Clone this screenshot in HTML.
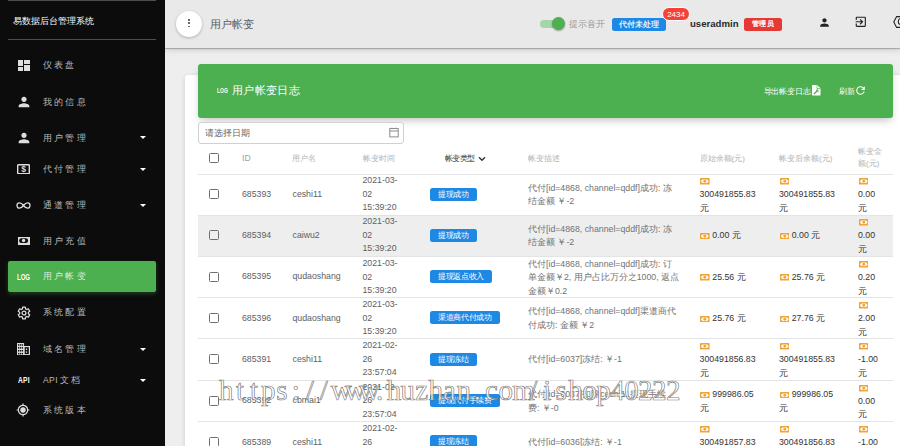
<!DOCTYPE html>
<html><head><meta charset="utf-8"><style>
*{box-sizing:border-box;margin:0;padding:0}
html,body{width:900px;height:446px;overflow:hidden;background:#eeeeee;font-family:'Liberation Sans',sans-serif;}
.abs{position:absolute}
#side{position:absolute;left:0;top:0;width:165px;height:446px;background:#0c0c0c;}
.sline{position:absolute;left:8px;width:148px;height:1px;background:#4e4e4e}
.title{position:absolute;left:13px;top:15px;font-size:9px;color:#fff;line-height:12px;white-space:nowrap}
.mi{position:absolute;left:43px;font-size:8.5px;color:#b8b8b8;letter-spacing:2.2px;line-height:12px;white-space:nowrap}
.ic{position:absolute;}
.caret{position:absolute;left:140px;width:0;height:0;border-left:3px solid transparent;border-right:3px solid transparent;border-top:3.5px solid #fff}
#hdr{position:absolute;left:165px;top:0;width:735px;height:48px;background:#e9e9e9;box-shadow:0 1px 1px rgba(0,0,0,.22),0 2px 6px rgba(0,0,0,.14)}
.card{position:absolute;left:185px;top:75px;width:730px;height:400px;background:#fff;border-radius:3px;box-shadow:0 1px 4px rgba(0,0,0,.14)}
.gh{position:absolute;left:198px;top:64px;width:695px;height:53.8px;background:#4caf50;border-radius:3px;box-shadow:0 4px 8px -2px rgba(0,0,0,.25)}
.th{position:absolute;font-size:8px;color:#b3b3b3;line-height:12px;white-space:nowrap}
.td{position:absolute;font-size:8.75px;color:#5e5e5e;line-height:13.5px;white-space:nowrap}
.cb{position:absolute;left:209.2px;width:10px;height:10px;border:1.3px solid #707070;border-radius:1.5px}
.badge{position:absolute;left:430px;height:12.9px;background:#1e88e5;border-radius:2.5px;color:#fff;font-size:7.6px;letter-spacing:-.35px;line-height:13.8px;padding:0 8.1px 0 8px;overflow:hidden;white-space:nowrap;font-weight:normal}
.rowline{position:absolute;left:198px;width:695px;height:1px;background:#e4e4e4}
.money{display:inline-block;width:9.6px;height:6.6px;vertical-align:-1.2px;margin-left:.7px}
</style></head><body>
<div id="side"><div class="sline" style="top:0"></div><div class="title">易数据后台管理系统</div><div class="sline" style="top:39px"></div><svg class="ic" style="left:18px;top:59.7px" width="12" height="12" viewBox="0 0 12 12"><rect x="0" y="0" width="5" height="6" fill="#ddd"/><rect x="0" y="7" width="5" height="4" fill="#ddd"/><rect x="6" y="0" width="6" height="4" fill="#ddd"/><rect x="6" y="5" width="6" height="6" fill="#ddd"/></svg><div class="mi" style="top:59.2px">仪表盘</div><svg class="ic" style="left:15.5px;top:93.6px" width="16" height="16" viewBox="0 0 24 24"><path fill="#ddd" d="M12 12c2.21 0 4-1.79 4-4s-1.79-4-4-4-4 1.79-4 4 1.79 4 4 4zm0 2c-2.67 0-8 1.34-8 4v2h16v-2c0-2.66-5.33-4-8-4z"/></svg><div class="mi" style="top:95.6px">我的信息</div><svg class="ic" style="left:15.5px;top:129.5px" width="16" height="16" viewBox="0 0 24 24"><path fill="#ddd" d="M12 12c2.21 0 4-1.79 4-4s-1.79-4-4-4-4 1.79-4 4 1.79 4 4 4zm0 2c-2.67 0-8 1.34-8 4v2h16v-2c0-2.66-5.33-4-8-4z"/></svg><div class="mi" style="top:131.5px">用户管理</div><div class="caret" style="top:136.0px"></div><svg class="ic" style="left:17.4px;top:163.5px" width="13" height="10.4" viewBox="0 0 13 10.4"><rect x="0.7" y="0.7" width="11.6" height="9" rx="0.6" fill="none" stroke="#ddd" stroke-width="1.4"/><text x="6.5" y="8.4" font-size="8.5" font-weight="bold" fill="#ddd" text-anchor="middle" font-family="Liberation Sans">$</text></svg><div class="mi" style="top:163px">代付管理</div><div class="caret" style="top:167.5px"></div><svg class="ic" style="left:15px;top:200.5px" width="17" height="9" viewBox="0 0 17 9"><path d="M8.5 4.5 C6 1 2 1 2 4.5 C2 8 6 8 8.5 4.5 C11 1 15 1 15 4.5 C15 8 11 8 8.5 4.5Z" fill="none" stroke="#ddd" stroke-width="1.3"/></svg><div class="mi" style="top:199px">通道管理</div><div class="caret" style="top:203.5px"></div><svg class="ic" style="left:18px;top:237px" width="12" height="8" viewBox="0 0 12 8"><rect x="0" y="0" width="12" height="8" fill="#ddd"/><rect x="1.1" y="1.25" width="9" height="4.8" rx="2.4" fill="#0c0c0c"/><circle cx="5.6" cy="3.5" r="1.7" fill="#ddd"/></svg><div class="mi" style="top:234.6px">用户充值</div><div class="abs" style="left:8px;top:261px;width:148px;height:31px;background:#4caf50;border-radius:2px;box-shadow:0 2px 4px rgba(76,175,80,.3)"></div><div class="abs" style="left:17px;top:271.6px;font-size:9px;font-weight:bold;color:#fff;line-height:11px;transform:scaleX(.67);transform-origin:left">LOG</div><div class="mi" style="top:270px;color:#dcebdc">用户帐变</div><svg class="ic" style="left:16.8px;top:305.7px" width="14" height="14" viewBox="0 0 24 24"><path fill="none" stroke="#ddd" stroke-width="2.1" stroke-linejoin="round" d="M9.68 1.96 L14.32 1.96 L14.72 4.90 L16.78 6.09 L19.53 4.98 L21.85 8.99 L19.51 10.81 L19.51 13.19 L21.85 15.01 L19.53 19.02 L16.78 17.91 L14.72 19.10 L14.32 22.04 L9.68 22.04 L9.28 19.10 L7.22 17.91 L4.47 19.02 L2.15 15.01 L4.49 13.19 L4.49 10.81 L2.15 8.99 L4.47 4.98 L7.22 6.09 L9.28 4.90Z"/><circle cx="12" cy="12" r="3.3" fill="none" stroke="#ddd" stroke-width="2.1"/></svg><div class="mi" style="top:306px">系统配置</div><svg class="ic" style="left:17.1px;top:342.6px" width="13" height="12.3" viewBox="0 0 13 12.3"><rect x="0" y="0" width="7.1" height="12.3" fill="#ddd"/><rect x="1.0" y="1.2" width="1.3" height="1.5" fill="#0c0c0c"/><rect x="1.0" y="4.1" width="1.3" height="1.5" fill="#0c0c0c"/><rect x="1.0" y="7.0" width="1.3" height="1.5" fill="#0c0c0c"/><rect x="1.0" y="9.9" width="1.3" height="1.5" fill="#0c0c0c"/><rect x="2.9" y="1.2" width="1.3" height="1.5" fill="#0c0c0c"/><rect x="2.9" y="4.1" width="1.3" height="1.5" fill="#0c0c0c"/><rect x="2.9" y="7.0" width="1.3" height="1.5" fill="#0c0c0c"/><rect x="2.9" y="9.9" width="1.3" height="1.5" fill="#0c0c0c"/><rect x="4.8" y="1.2" width="1.3" height="1.5" fill="#0c0c0c"/><rect x="4.8" y="4.1" width="1.3" height="1.5" fill="#0c0c0c"/><rect x="4.8" y="7.0" width="1.3" height="1.5" fill="#0c0c0c"/><rect x="4.8" y="9.9" width="1.3" height="1.5" fill="#0c0c0c"/><rect x="7.1" y="3.6" width="5.3" height="8.1" fill="none" stroke="#ddd" stroke-width="1.2"/><rect x="8.8" y="5.6" width="1.4" height="1.4" fill="#ddd"/><rect x="8.8" y="8.4" width="1.4" height="1.4" fill="#ddd"/></svg><div class="mi" style="top:343px">域名管理</div><div class="caret" style="top:347.5px"></div><div class="abs" style="left:18px;top:374.4px;font-size:9.5px;font-weight:bold;color:#fff;line-height:11px;transform:scaleX(.7);transform-origin:left;letter-spacing:.3px">API</div><div class="mi" style="top:374px"><span style="letter-spacing:.4px;margin-right:2px">API</span>文档</div><div class="caret" style="top:378.5px"></div><svg class="ic" style="left:16.4px;top:403px" width="14" height="14" viewBox="0 0 24 24"><circle cx="12" cy="12" r="4.6" fill="#ddd"/><path fill="#ddd" d="M12 8c-2.21 0-4 1.79-4 4s1.79 4 4 4 4-1.79 4-4-1.79-4-4-4zm8.94 3A8.994 8.994 0 0 0 13 3.06V1h-2v2.06A8.994 8.994 0 0 0 3.06 11H1v2h2.06A8.994 8.994 0 0 0 11 20.94V23h2v-2.06A8.994 8.994 0 0 0 20.94 13H23v-2h-2.06zM12 19c-3.87 0-7-3.13-7-7s3.13-7 7-7 7 3.13 7 7-3.13 7-7 7z"/></svg><div class="mi" style="top:404px">系统版本</div></div><div id="hdr"></div><div class="abs" style="left:176px;top:10.5px;width:26px;height:26px;border-radius:50%;background:#fff;box-shadow:0 1px 3px rgba(0,0,0,.25)"></div><div class="abs" style="left:188.1px;top:19.1px;width:1.7px;height:1.7px;background:#666;border-radius:.3px"></div><div class="abs" style="left:188.1px;top:22.45px;width:1.7px;height:1.7px;background:#666;border-radius:.3px"></div><div class="abs" style="left:188.1px;top:25.8px;width:1.7px;height:1.7px;background:#666;border-radius:.3px"></div><div class="abs" style="left:210px;top:17px;font-size:11px;color:#5c5c5c;line-height:14px">用户帐变</div><div class="abs" style="left:540px;top:20px;width:21px;height:8px;border-radius:4px;background:#a5d6a7"></div><div class="abs" style="left:551.5px;top:17.2px;width:13px;height:13px;border-radius:50%;background:#4caf50;box-shadow:0 1px 2px rgba(0,0,0,.35)"></div><div class="abs" style="left:569px;top:18px;font-size:9px;color:#999;line-height:12px">提示音开</div><div class="abs" style="left:612px;top:18px;width:54px;height:12.8px;border-radius:2.5px;background:#1e88e5;color:#fff;font-size:8px;line-height:13px;text-align:center;letter-spacing:-.2px;font-weight:normal;-webkit-text-stroke:.15px #fff">代付未处理</div><div class="abs" style="left:662.3px;top:7px;width:27.5px;height:13.8px;border-radius:7px;background:#f44336;border:1.5px solid #fff;color:#fff;font-size:8px;line-height:13.2px;text-align:center">2434</div><div class="abs" style="left:690px;top:16.5px;font-size:9.6px;color:#2a2a2a;font-weight:bold;line-height:13px">useradmin</div><div class="abs" style="left:744px;top:18.2px;width:38px;height:12.6px;border-radius:2.5px;background:#e53935;color:#fff;font-size:7.4px;line-height:12.8px;text-align:center;letter-spacing:.3px;-webkit-text-stroke:.3px #fff">管理员</div><svg class="ic" style="left:817.5px;top:15.5px" width="13" height="13" viewBox="0 0 24 24"><path fill="#222" d="M12 12c2.21 0 4-1.79 4-4s-1.79-4-4-4-4 1.79-4 4 1.79 4 4 4zm0 2c-2.67 0-8 1.34-8 4v2h16v-2c0-2.66-5.33-4-8-4z"/></svg><svg class="ic" style="left:854px;top:15.4px" width="13.6" height="13.6" viewBox="0 0 24 24"><path fill="#222" d="M10.09 15.59L11.5 17l5-5-5-5-1.41 1.41L12.67 11H3v2h9.67l-2.58 2.59zM19 3H5c-1.11 0-2 .9-2 2v4h2V5h14v14H5v-4H3v4c0 1.1.89 2 2 2h14c1.1 0 2-.9 2-2V5c0-1.1-.9-2-2-2z"/></svg><svg class="ic" style="left:892px;top:15px" width="16" height="14" viewBox="0 0 16 14"><path d="M1.8 7 L4.6 1.6 H10.7 L13.7 7 L10.7 12.4 H4.6 Z" fill="none" stroke="#222" stroke-width="1.1"/><circle cx="9.5" cy="6.5" r="3.2" fill="none" stroke="#222" stroke-width="1.1"/></svg><div class="card"></div><div class="gh"></div><div class="abs" style="left:216.7px;top:86.5px;font-size:6.6px;font-weight:bold;color:#fff;line-height:8px;transform:scaleX(.76);transform-origin:left">LOG</div><div class="abs" style="left:232px;top:83.3px;font-size:11.3px;color:#fff;line-height:14px;letter-spacing:.35px">用户帐变日志</div><div class="abs" style="left:763.5px;top:87px;font-size:7.55px;color:#fff;line-height:10px;letter-spacing:-.05px">导出帐变日志</div><svg class="ic" style="left:812.2px;top:85px" width="8.5" height="10.5" viewBox="0 0 8.5 10.5"><path d="M0 .6a.6.6 0 0 1 .6-.6h4.6L8.5 3.3v6.6a.6.6 0 0 1-.6.6H.6a.6.6 0 0 1-.6-.6z" fill="#fff"/><path d="M5 0.2 L5 3.5 L8.3 3.5" fill="none" stroke="#4caf50" stroke-width=".7"/><path d="M2 9 L5.3 5.7" stroke="#4caf50" stroke-width="1.3" fill="none"/><path d="M3.6 4.6 L6.4 4.6 L6.4 7.4 Z" fill="#4caf50"/></svg><div class="abs" style="left:838.8px;top:87px;font-size:7.6px;color:#fff;line-height:10px">刷新</div><svg class="ic" style="left:853.5px;top:84px" width="13" height="13" viewBox="0 0 24 24"><path fill="#fff" d="M17.65 6.35A7.958 7.958 0 0 0 12 4c-4.42 0-7.99 3.58-7.99 8s3.57 8 7.99 8c3.73 0 6.84-2.55 7.73-6h-2.08A5.99 5.99 0 0 1 12 18c-3.31 0-6-2.69-6-6s2.69-6 6-6c1.66 0 3.14.69 4.22 1.78L13 11h7V4l-2.35 2.35z"/></svg><div class="abs" style="left:198px;top:122px;width:205.5px;height:21.8px;border:.8px solid #d0d0d0;border-radius:3px;background:#fff"></div><div class="abs" style="left:205.3px;top:126.5px;font-size:8.75px;color:#666;line-height:12px">请选择日期</div><svg class="ic" style="left:388.5px;top:127px" width="10" height="10.5" viewBox="0 0 10 10.5"><rect x="0.8" y="1.6" width="8.4" height="8.3" fill="none" stroke="#808080" stroke-width=".9"/><line x1="0.8" y1="4" x2="9.2" y2="4" stroke="#808080" stroke-width=".9"/><line x1="3" y1="0.6" x2="3" y2="2" stroke="#808080" stroke-width=".8"/><line x1="7" y1="0.6" x2="7" y2="2" stroke="#808080" stroke-width=".8"/></svg><div class="cb" style="top:153.25px"></div><div class="th" style="left:242px;top:152.2px;font-size:8.75px;color:#a0a0a0">ID</div><div class="th" style="left:292px;top:152.5px">用户名</div><div class="th" style="left:362.7px;top:152.5px">帐变时间</div><div class="th" style="left:528px;top:152.5px">帐变描述</div><div class="th" style="left:699.6px;top:152.5px">原始余额(元)</div><div class="th" style="left:779px;top:152.5px">帐变后余额(元)</div><div class="th" style="left:858px;top:146px;line-height:12.4px">帐变金<br>额(元)</div><div class="th" style="left:444.5px;top:152.5px;color:#333;letter-spacing:-.4px">帐变类型</div><svg class="ic" style="left:478px;top:155.5px" width="8" height="6" viewBox="0 0 8 6"><path d="M1 1.2 L4 4.2 L7 1.2" fill="none" stroke="#333" stroke-width="1.4"/></svg><div class="rowline" style="top:174px"></div><div class="cb" style="top:189.0px"></div><div class="td" style="left:242px;top:187.70000000000002px">685393</div><div class="td" style="left:292.5px;top:187.70000000000002px">ceshi11</div><div class="td" style="left:362.5px;top:174.3px">2021-03-<br>02<br>15:39:20</div><div class="badge" style="top:187.9px">提现成功</div><div class="td" style="left:528px;top:181.60000000000002px;color:#727272">代付[id=4868, channel=qddf]成功: 冻<br>结金额 ￥-2</div><div class="td" style="left:699.6px;top:174.8px;color:#333"><svg class="money" viewBox="0 0 9.6 6.6"><rect x="0" y="0" width="9.6" height="6.6" rx="0.6" fill="#f0a53a"/><rect x="1.3" y="1.5" width="7" height="3.6" rx="1.8" fill="#fff"/><circle cx="4.8" cy="3.3" r="1.45" fill="#f0a53a"/></svg><br>300491855.83<br>元</div><div class="td" style="left:779px;top:174.8px;color:#333"><svg class="money" viewBox="0 0 9.6 6.6"><rect x="0" y="0" width="9.6" height="6.6" rx="0.6" fill="#f0a53a"/><rect x="1.3" y="1.5" width="7" height="3.6" rx="1.8" fill="#fff"/><circle cx="4.8" cy="3.3" r="1.45" fill="#f0a53a"/></svg><br>300491855.83<br>元</div><div class="td" style="left:858px;top:174.8px;color:#333"><svg class="money" viewBox="0 0 9.6 6.6"><rect x="0" y="0" width="9.6" height="6.6" rx="0.6" fill="#f0a53a"/><rect x="1.3" y="1.5" width="7" height="3.6" rx="1.8" fill="#fff"/><circle cx="4.8" cy="3.3" r="1.45" fill="#f0a53a"/></svg><br>0.00<br>元</div><div class="abs" style="left:198px;top:215px;width:695px;height:40.900000000000006px;background:#eeeeee"></div><div class="rowline" style="top:215px"></div><div class="cb" style="top:229.85px"></div><div class="td" style="left:242px;top:228.65px">685394</div><div class="td" style="left:292.5px;top:228.65px">caiwu2</div><div class="td" style="left:362.5px;top:215.25px">2021-03-<br>02<br>15:39:20</div><div class="badge" style="top:228.85px">提现成功</div><div class="td" style="left:528px;top:222.55px;color:#727272">代付[id=4868, channel=qddf]成功: 冻<br>结金额 ￥-2</div><div class="td" style="left:699.6px;top:229.1px;color:#333"><svg class="money" viewBox="0 0 9.6 6.6"><rect x="0" y="0" width="9.6" height="6.6" rx="0.6" fill="#f0a53a"/><rect x="1.3" y="1.5" width="7" height="3.6" rx="1.8" fill="#fff"/><circle cx="4.8" cy="3.3" r="1.45" fill="#f0a53a"/></svg> 0.00 元</div><div class="td" style="left:779px;top:229.1px;color:#333"><svg class="money" viewBox="0 0 9.6 6.6"><rect x="0" y="0" width="9.6" height="6.6" rx="0.6" fill="#f0a53a"/><rect x="1.3" y="1.5" width="7" height="3.6" rx="1.8" fill="#fff"/><circle cx="4.8" cy="3.3" r="1.45" fill="#f0a53a"/></svg> 0.00 元</div><div class="td" style="left:858px;top:215.75px;color:#333"><svg class="money" viewBox="0 0 9.6 6.6"><rect x="0" y="0" width="9.6" height="6.6" rx="0.6" fill="#f0a53a"/><rect x="1.3" y="1.5" width="7" height="3.6" rx="1.8" fill="#fff"/><circle cx="4.8" cy="3.3" r="1.45" fill="#f0a53a"/></svg><br>0.00<br>元</div><div class="rowline" style="top:255.9px"></div><div class="cb" style="top:271.7px"></div><div class="td" style="left:242px;top:270.4px">685395</div><div class="td" style="left:292.5px;top:270.4px">qudaoshang</div><div class="td" style="left:362.5px;top:257.0px">2021-03-<br>02<br>15:39:20</div><div class="badge" style="top:270.29999999999995px">提现返点收入</div><div class="td" style="left:528px;top:257.55px;color:#727272">代付[id=4868, channel=qddf]成功: 订<br>单金额￥2, 用户占比万分之1000, 返点<br>金额￥0.2</div><div class="td" style="left:699.6px;top:270.85px;color:#333"><svg class="money" viewBox="0 0 9.6 6.6"><rect x="0" y="0" width="9.6" height="6.6" rx="0.6" fill="#f0a53a"/><rect x="1.3" y="1.5" width="7" height="3.6" rx="1.8" fill="#fff"/><circle cx="4.8" cy="3.3" r="1.45" fill="#f0a53a"/></svg> 25.56 元</div><div class="td" style="left:779px;top:270.85px;color:#333"><svg class="money" viewBox="0 0 9.6 6.6"><rect x="0" y="0" width="9.6" height="6.6" rx="0.6" fill="#f0a53a"/><rect x="1.3" y="1.5" width="7" height="3.6" rx="1.8" fill="#fff"/><circle cx="4.8" cy="3.3" r="1.45" fill="#f0a53a"/></svg> 25.76 元</div><div class="td" style="left:858px;top:257.5px;color:#333"><svg class="money" viewBox="0 0 9.6 6.6"><rect x="0" y="0" width="9.6" height="6.6" rx="0.6" fill="#f0a53a"/><rect x="1.3" y="1.5" width="7" height="3.6" rx="1.8" fill="#fff"/><circle cx="4.8" cy="3.3" r="1.45" fill="#f0a53a"/></svg><br>0.20<br>元</div><div class="rowline" style="top:296.9px"></div><div class="cb" style="top:312.7px"></div><div class="td" style="left:242px;top:311.5px">685396</div><div class="td" style="left:292.5px;top:311.5px">qudaoshang</div><div class="td" style="left:362.5px;top:298.1px">2021-03-<br>02<br>15:39:20</div><div class="badge" style="top:311.4px">渠道商代付成功</div><div class="td" style="left:528px;top:305.40000000000003px;color:#727272">代付[id=4868, channel=qddf]渠道商代<br>付成功: 金额 ￥2</div><div class="td" style="left:699.6px;top:311.95000000000005px;color:#333"><svg class="money" viewBox="0 0 9.6 6.6"><rect x="0" y="0" width="9.6" height="6.6" rx="0.6" fill="#f0a53a"/><rect x="1.3" y="1.5" width="7" height="3.6" rx="1.8" fill="#fff"/><circle cx="4.8" cy="3.3" r="1.45" fill="#f0a53a"/></svg> 25.76 元</div><div class="td" style="left:779px;top:311.95000000000005px;color:#333"><svg class="money" viewBox="0 0 9.6 6.6"><rect x="0" y="0" width="9.6" height="6.6" rx="0.6" fill="#f0a53a"/><rect x="1.3" y="1.5" width="7" height="3.6" rx="1.8" fill="#fff"/><circle cx="4.8" cy="3.3" r="1.45" fill="#f0a53a"/></svg> 27.76 元</div><div class="td" style="left:858px;top:298.6px;color:#333"><svg class="money" viewBox="0 0 9.6 6.6"><rect x="0" y="0" width="9.6" height="6.6" rx="0.6" fill="#f0a53a"/><rect x="1.3" y="1.5" width="7" height="3.6" rx="1.8" fill="#fff"/><circle cx="4.8" cy="3.3" r="1.45" fill="#f0a53a"/></svg><br>2.00<br>元</div><div class="rowline" style="top:338.1px"></div><div class="cb" style="top:354.1px"></div><div class="td" style="left:242px;top:352.8px">685391</div><div class="td" style="left:292.5px;top:352.8px">ceshi11</div><div class="td" style="left:362.5px;top:339.40000000000003px">2021-02-<br>26<br>23:57:04</div><div class="badge" style="top:352.7px">提现冻结</div><div class="td" style="left:528px;top:353.45000000000005px;color:#727272">代付[id=6037]冻结: ￥-1</div><div class="td" style="left:699.6px;top:339.90000000000003px;color:#333"><svg class="money" viewBox="0 0 9.6 6.6"><rect x="0" y="0" width="9.6" height="6.6" rx="0.6" fill="#f0a53a"/><rect x="1.3" y="1.5" width="7" height="3.6" rx="1.8" fill="#fff"/><circle cx="4.8" cy="3.3" r="1.45" fill="#f0a53a"/></svg><br>300491856.83<br>元</div><div class="td" style="left:779px;top:339.90000000000003px;color:#333"><svg class="money" viewBox="0 0 9.6 6.6"><rect x="0" y="0" width="9.6" height="6.6" rx="0.6" fill="#f0a53a"/><rect x="1.3" y="1.5" width="7" height="3.6" rx="1.8" fill="#fff"/><circle cx="4.8" cy="3.3" r="1.45" fill="#f0a53a"/></svg><br>300491855.83<br>元</div><div class="td" style="left:858px;top:339.90000000000003px;color:#333"><svg class="money" viewBox="0 0 9.6 6.6"><rect x="0" y="0" width="9.6" height="6.6" rx="0.6" fill="#f0a53a"/><rect x="1.3" y="1.5" width="7" height="3.6" rx="1.8" fill="#fff"/><circle cx="4.8" cy="3.3" r="1.45" fill="#f0a53a"/></svg><br>-1.00<br>元</div><div class="rowline" style="top:379.5px"></div><div class="cb" style="top:395.6px"></div><div class="td" style="left:242px;top:394.25px">685392</div><div class="td" style="left:292.5px;top:394.25px">cbmai1</div><div class="td" style="left:362.5px;top:380.85px">2021-02-<br>26<br>23:57:04</div><div class="badge" style="top:394.15px">提现代付手续费</div><div class="td" style="left:528px;top:388.15000000000003px;color:#727272">代付[id=6037]扣除ceshi11提现手续<br>费: ￥-0</div><div class="td" style="left:699.6px;top:388.05px;color:#333"><svg class="money" viewBox="0 0 9.6 6.6"><rect x="0" y="0" width="9.6" height="6.6" rx="0.6" fill="#f0a53a"/><rect x="1.3" y="1.5" width="7" height="3.6" rx="1.8" fill="#fff"/><circle cx="4.8" cy="3.3" r="1.45" fill="#f0a53a"/></svg> 999986.05<br>元</div><div class="td" style="left:779px;top:388.05px;color:#333"><svg class="money" viewBox="0 0 9.6 6.6"><rect x="0" y="0" width="9.6" height="6.6" rx="0.6" fill="#f0a53a"/><rect x="1.3" y="1.5" width="7" height="3.6" rx="1.8" fill="#fff"/><circle cx="4.8" cy="3.3" r="1.45" fill="#f0a53a"/></svg> 999986.05<br>元</div><div class="td" style="left:858px;top:381.35px;color:#333"><svg class="money" viewBox="0 0 9.6 6.6"><rect x="0" y="0" width="9.6" height="6.6" rx="0.6" fill="#f0a53a"/><rect x="1.3" y="1.5" width="7" height="3.6" rx="1.8" fill="#fff"/><circle cx="4.8" cy="3.3" r="1.45" fill="#f0a53a"/></svg><br>0.00<br>元</div><div class="rowline" style="top:421px"></div><div class="cb" style="top:436.9px"></div><div class="td" style="left:242px;top:435.5px">685389</div><div class="td" style="left:292.5px;top:435.5px">ceshi11</div><div class="td" style="left:362.5px;top:422.1px">2021-02-<br>26<br>23:57:04</div><div class="badge" style="top:435.4px">提现冻结</div><div class="td" style="left:528px;top:436.15000000000003px;color:#727272">代付[id=6036]冻结: ￥-1</div><div class="td" style="left:699.6px;top:422.6px;color:#333"><svg class="money" viewBox="0 0 9.6 6.6"><rect x="0" y="0" width="9.6" height="6.6" rx="0.6" fill="#f0a53a"/><rect x="1.3" y="1.5" width="7" height="3.6" rx="1.8" fill="#fff"/><circle cx="4.8" cy="3.3" r="1.45" fill="#f0a53a"/></svg><br>300491857.83<br>元</div><div class="td" style="left:779px;top:422.6px;color:#333"><svg class="money" viewBox="0 0 9.6 6.6"><rect x="0" y="0" width="9.6" height="6.6" rx="0.6" fill="#f0a53a"/><rect x="1.3" y="1.5" width="7" height="3.6" rx="1.8" fill="#fff"/><circle cx="4.8" cy="3.3" r="1.45" fill="#f0a53a"/></svg><br>300491856.83<br>元</div><div class="td" style="left:858px;top:422.6px;color:#333"><svg class="money" viewBox="0 0 9.6 6.6"><rect x="0" y="0" width="9.6" height="6.6" rx="0.6" fill="#f0a53a"/><rect x="1.3" y="1.5" width="7" height="3.6" rx="1.8" fill="#fff"/><circle cx="4.8" cy="3.3" r="1.45" fill="#f0a53a"/></svg><br>-1.00<br>元</div><div class="abs" style="left:219px;top:372.5px;width:470px;height:34px;font-family:'Liberation Serif',serif;font-size:29px;line-height:34px;color:rgba(255,255,255,.8);-webkit-text-stroke:.7px rgba(100,100,100,.85);white-space:nowrap"><span style="position:absolute;left:0.00px;width:14px;text-align:center">h</span><span style="position:absolute;left:13.97px;width:14px;text-align:center">t</span><span style="position:absolute;left:27.94px;width:14px;text-align:center">t</span><span style="position:absolute;left:41.91px;width:14px;text-align:center">p</span><span style="position:absolute;left:55.88px;width:14px;text-align:center">s</span><span style="position:absolute;left:69.85px;width:14px;text-align:center">:</span><span style="position:absolute;left:83.82px;width:14px;text-align:center">/</span><span style="position:absolute;left:97.79px;width:14px;text-align:center">/</span><span style="position:absolute;left:111.76px;width:14px;text-align:center">w</span><span style="position:absolute;left:125.73px;width:14px;text-align:center">w</span><span style="position:absolute;left:139.70px;width:14px;text-align:center">w</span><span style="position:absolute;left:153.67px;width:14px;text-align:center">.</span><span style="position:absolute;left:167.64px;width:14px;text-align:center">h</span><span style="position:absolute;left:181.61px;width:14px;text-align:center">u</span><span style="position:absolute;left:195.58px;width:14px;text-align:center">z</span><span style="position:absolute;left:209.55px;width:14px;text-align:center">h</span><span style="position:absolute;left:223.52px;width:14px;text-align:center">a</span><span style="position:absolute;left:237.49px;width:14px;text-align:center">n</span><span style="position:absolute;left:251.46px;width:14px;text-align:center">.</span><span style="position:absolute;left:265.43px;width:14px;text-align:center">c</span><span style="position:absolute;left:279.40px;width:14px;text-align:center">o</span><span style="position:absolute;left:293.37px;width:14px;text-align:center">m</span><span style="position:absolute;left:307.34px;width:14px;text-align:center">/</span><span style="position:absolute;left:321.31px;width:14px;text-align:center">i</span><span style="position:absolute;left:335.28px;width:14px;text-align:center">s</span><span style="position:absolute;left:349.25px;width:14px;text-align:center">h</span><span style="position:absolute;left:363.22px;width:14px;text-align:center">o</span><span style="position:absolute;left:377.19px;width:14px;text-align:center">p</span><span style="position:absolute;left:391.16px;width:14px;text-align:center">4</span><span style="position:absolute;left:405.13px;width:14px;text-align:center">0</span><span style="position:absolute;left:419.10px;width:14px;text-align:center">2</span><span style="position:absolute;left:433.07px;width:14px;text-align:center">2</span><span style="position:absolute;left:447.04px;width:14px;text-align:center">2</span></div>
</body></html>
